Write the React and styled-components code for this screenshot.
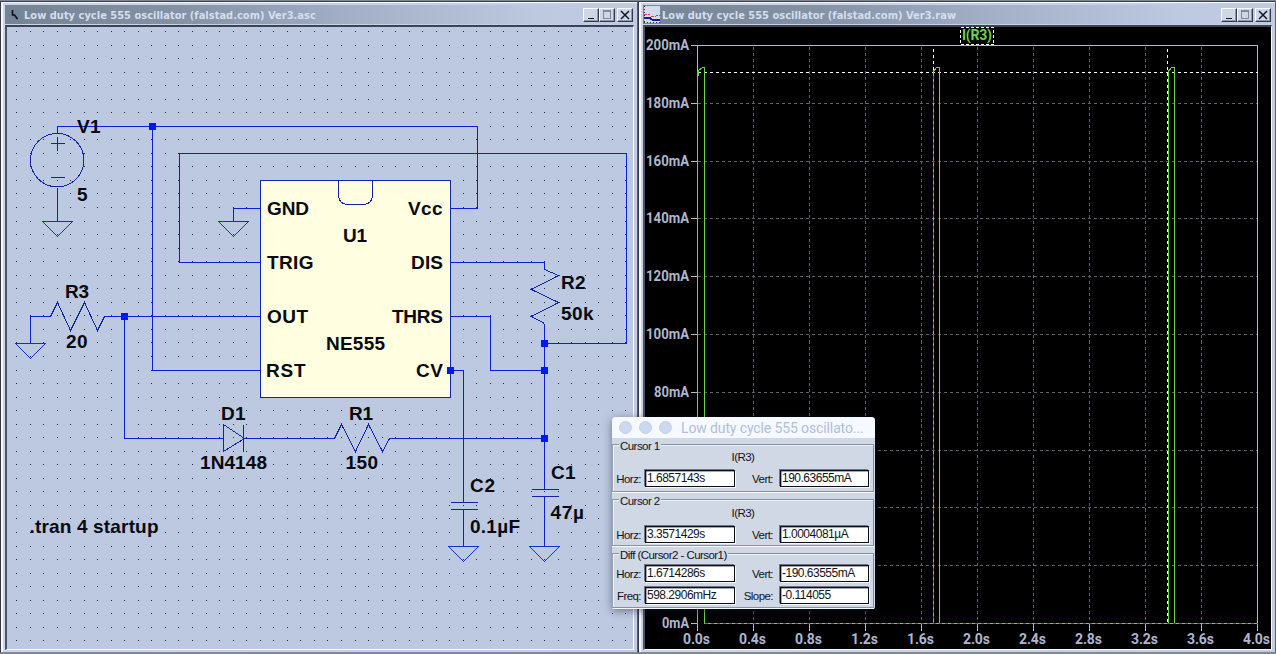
import React from "react";
import styled, { createGlobalStyle } from "styled-components";

const GlobalStyle = createGlobalStyle`
  html, body { margin: 0; padding: 0; overflow: hidden; background: #3c4252; }
  * { box-sizing: border-box; }
`;

const Desktop = styled.main`
  position: relative;
  display: flex;
  width: 1276px;
  height: 654px;
  padding-top: 1px;
  background: #7d8798;
`;

const Window = styled.section`
  width: ${(p) => p.$width}px;
  height: 652px;
  padding: 2px 1px 2px 2px;
  display: flex;
  flex-direction: column;
  background: linear-gradient(90deg, #cdd5e4, #c3cce3);
  border-top: 1px solid #3a3f50;
  border-left: 1px solid #353a4b;
  border-right: 1px solid #555e76;
  border-bottom: 1px solid #7c8aa9;
  box-shadow: inset 2px 1px 0 #f7f9fd;
`;

const TitleBar = styled.header`
  display: flex;
  align-items: center;
  height: 19px;
  margin: 1px 2px 1px 2px;
  padding: 0 1px 0 ${(p) => p.$inset}px;
  background: linear-gradient(90deg, #758494 0%, #8591a5 28%, #a3afc7 55%, #bdc8e1 85%, #c0cbe3 100%);
`;

const Title = styled.h1`
  flex: 1;
  margin: 2px 0 0 ${(p) => p.$gap || 0}px;
  font: bold 11px/18px "DejaVu Sans Condensed", "DejaVu Sans", sans-serif;
  letter-spacing: 0.01px;
  color: #d4deef;
  white-space: pre;
`;

const WindowButton = styled.button`
  width: 16px;
  height: 14px;
  padding: 0;
  margin-left: ${(p) => p.$gap || 0}px;
  display: grid;
  place-items: center;
  background: #cfd7e6;
  border: 1px solid;
  border-color: #fff #34394b #34394b #fff;
  box-shadow: inset -1px -1px #8e99ae;
`;

const Client = styled.div`
  flex: 1;
  min-height: 0;
  margin: 0 2px 0 2px;
  border-top: 2px solid #3b4356;
  border-left: 2px solid #4a5369;
  border-right: 1px solid #fafcff;
  border-bottom: 1px solid #fafcff;
  background: ${(p) => p.$bg};
  overflow: hidden;
`;

const Drawing = styled.svg`
  display: block;
`;

const Dialog = styled.section`
  position: absolute;
  left: 612px;
  top: 417px;
  width: 263px;
  height: 192px;
  display: flex;
  flex-direction: column;
  border-radius: 4px 4px 2px 2px;
  background: #d0d7e5;
  overflow: hidden;
  box-shadow: 0 2px 8px rgba(20, 28, 60, 0.5);
  font: 11.5px/14px "Liberation Sans", Arial, sans-serif;
  letter-spacing: -0.55px;
  color: #10131c;
`;

const DialogBar = styled.header`
  display: flex;
  align-items: center;
  height: 21px;
  padding-left: 7px;
  gap: 7px;
  background: #f6f9ff;
`;

const Light = styled.span`
  width: 13px;
  height: 13px;
  border-radius: 50%;
  background: #ccd8ed;
  border: 1px solid #c3d0e8;
`;

const DialogTitle = styled.h2`
  margin: 1px 0 0 2px;
  font: 400 14px/22px Roboto, sans-serif;
  letter-spacing: -0.12px;
  color: #aebfe0;
  white-space: nowrap;
`;

const Group = styled.section`
  position: relative;
  display: flex;
  flex-direction: column;
  height: ${(p) => p.$height}px;
  margin: ${(p) => p.$top}px 1px 0 0;
  border: 1px solid #8791a5;
  border-left-color: #9aa4b8;
  box-shadow: inset 1px 1px #eef2f9, 0 1px #f8faff;
  padding-top: ${(p) => p.$pad}px;
  gap: 3px;
`;

const Legend = styled.span`
  position: absolute;
  left: 6px;
  top: -6px;
  padding: 0 1px;
  line-height: 14px;
  background: #d0d7e5;
  white-space: nowrap;
`;

const TraceName = styled.div`
  text-align: center;
  line-height: 14px;
  margin-bottom: 2px;
`;

const Row = styled.div`
  display: grid;
  grid-template-columns: 32px 90px 45px 89px;
  align-items: center;
  height: 19px;
`;

const Label = styled.label`
  text-align: right;
  padding: 0 ${(p) => p.$gap}px 0 0;
`;

const Field = styled.output`
  height: 17px;
  padding-left: 1px;
  font-size: 12px;
  line-height: 15px;
  letter-spacing: -0.5px;
  background: #fff;
  border: 1px solid #0b0e16;
  box-shadow: -1px -1px #6d778a, 1px 1px #f8faff, inset 0.5px 0.5px #4b5160;
  white-space: nowrap;
`;

const WIRE = "#0a1fdc";
const PART = "#1024a8";
const TRACE = "#69d843";
const grid = (start, count) =>
  Array.from({ length: count }, (_, i) => start + Math.round(i * 13.54));
const dotPath = grid(31, 46)
  .map((y) => grid(16, 46).map((x) => `M${x} ${y}h1v1h-1z`).join(""))
  .join("");

const partLabels = [
  ["V1", 77, 133, 23.5], ["5", 77, 201, 10.5], ["R3", 65, 298, 24], ["20", 66, 348, 21.5],
  ["D1", 221, 420, 24.5], ["1N4148", 200, 469, 67], ["R1", 349, 420, 24], ["150", 345.5, 469, 32.5],
  ["R2", 561, 289, 24.5], ["50k", 561, 320, 32.5], ["C2", 470, 492, 25], ["0.1µF", 470, 532.5, 50],
  ["C1", 551, 479, 24.5], ["47µ", 550.5, 519, 33.5], [".tran 4 startup", 29.5, 532.5, 129],
  ["GND", 267, 215, 42], ["TRIG", 267, 269, 46.5], ["OUT", 267, 323, 41], ["RST", 266, 377, 39.5],
  ["Vcc", 408, 215, 34.5], ["DIS", 411, 269, 32], ["THRS", 392, 323, 51], ["CV", 416, 377, 27],
  ["U1", 343, 242, 24], ["NE555", 326, 350, 59],
];

const junctions = [[152, 126], [124, 316], [544, 343], [544, 370], [544, 438], [450, 370]];

function Ground({ x, y }) {
  return <path d={`M${x - 15} ${y}H${x + 15}L${x} ${y + 15}Z`} stroke="#1430cc" />;
}

function Schematic() {
  return (
    <Drawing width="627" height="623" viewBox="7 27 627 623">
      <path d={dotPath} fill="#20283c" shapeRendering="crispEdges" />
      <g transform="translate(.5 .5)" fill="none" stroke={WIRE} shapeRendering="crispEdges">
        <path d="M57 133V126H477V208H450M152 126V370H260M260 262H179V153H626V343H544M57 187V221M260 208H233V221M260 316H104M30 343V316H50M124 316V438H223M244 438H334M389 438H544M450 262H544V269M450 316H490V370H544M544 323V489M544 496V546M450 370H463V502M463 509V546" />
        <g stroke={PART}>
          <circle cx="56.7" cy="159.7" r="26.7" />
          <path d="M50 143H64M57 136V150M50 177H64" />
          <path d="M50 316L57 302L70 330L84 302L97 330L104 316" />
          <path d="M334 438L341 424L355 451L368 424L382 451L389 438" />
          <path d="M544 269L558 275L531 289L558 302L531 316L544 323" />
          <path d="M223 424V451L244 438ZM243 424V451" />
          <path d="M450 502H477M450 509H477M531 489H558M531 496H558" />
          <rect x="260" y="180" width="190" height="217" fill="#fffee0" />
          <path d="M338 180V194Q338 204 348 204H362Q372 204 372 194V180" />
        </g>
        <Ground x={57} y={221} />
        <Ground x={233} y={221} />
        <Ground x={30} y={343} />
        <Ground x={463} y={546} />
        <Ground x={544} y={546} />
      </g>
      {junctions.map(([x, y]) => (
        <rect key={`${x}-${y}`} x={x - 3} y={y - 3} width="7" height="7" fill="#0018f5" />
      ))}
      <g fontFamily="'Liberation Sans', Arial, sans-serif" fontSize="19" fontWeight="700" fill="#080a12">
        {partLabels.map(([text, x, y, w]) => (
          <text key={text} x={x} y={y} textLength={w}>{text}</text>
        ))}
      </g>
    </Drawing>
  );
}

const xs = Array.from({ length: 11 }, (_, i) => 697 + 56 * i);
const ys = Array.from({ length: 11 }, (_, i) => Math.round(45 + 57.8 * i));
const currentLabels = [200, 180, 160, 140, 120, 100, 80, 0];

function Plot() {
  return (
    <Drawing width="626" height="623" viewBox="645 27 626 623">
      <g transform="translate(.5 .5)" fill="none" shapeRendering="crispEdges">
        <path
          stroke="#5f626f"
          strokeDasharray="3 3"
          d={xs.slice(1, 10).map((x) => `M${x} 46V623`).join("") + ys.slice(1, 10).map((y) => `M697 ${y}H1257`).join("")}
        />
        <path
          stroke="#b3bace"
          d={"M697 623V45H1257V623" + ys.map((y) => `M690 ${y}H697`).join("") + xs.map((x) => `M${x} 623V630`).join("")}
        />
        <path stroke="#fff" strokeDasharray="3 3" d="M697 72H1257M933 48V72" />
        <path stroke={TRACE} d="M698 75V70L702 67H704M933 71L936 67H939M1168 71L1171 67H1174M704 623H1257" />
      </g>
      <g fill={TRACE} shapeRendering="crispEdges">
        {[[697, 70], [704, 67], [933, 70], [939, 67], [1168, 70], [1174, 67]].map(([x, y]) => (
          <rect key={x} x={x} y={y} width="1" height={624 - y} />
        ))}
      </g>
      <g transform="translate(.5 .5)" fill="none" shapeRendering="crispEdges">
        <path stroke="#fff" strokeDasharray="3 3" d="M1167 48V623" />
        <path stroke="#9b369a" strokeDasharray="3 3" d="M704 623H1257M933 75V623" />
        <rect x="960" y="27" width="33" height="17" stroke="#fff" strokeDasharray="3 2" />
      </g>
      <g fontFamily="Roboto, sans-serif" fontSize="14" fontWeight="700" fill="#aeb7ce">
        {currentLabels.map((value) => {
          const w = value >= 100 ? 43 : value > 0 ? 35 : 27;
          return (
            <text key={value} x={689 - w} y={ys[(200 - value) / 20] + 5} textLength={w} lengthAdjust="spacingAndGlyphs">
              {`${value}mA`}
            </text>
          );
        })}
        {xs.map((x, i) => (
          <text key={x} x={x - 14} y="644" textLength="27">{`${(0.4 * i).toFixed(1)}s`}</text>
        ))}
        <text x="962" y="40" textLength="30" fill={TRACE}>I(R3)</text>
      </g>
    </Drawing>
  );
}

function WindowControls() {
  const ink = { fill: "none", shapeRendering: "crispEdges" };
  return (
    <>
      <WindowButton aria-label="Minimize">
        <svg width="12" height="10" {...ink}><path d="M3 8.5H9" stroke="#111624" /></svg>
      </WindowButton>
      <WindowButton aria-label="Maximize">
        <svg width="12" height="10" {...ink}><path d="M2 1H10" stroke="#7e899f" strokeWidth="2" /><path d="M2.5 1V9M9.5 1V9M2 8.5H10" stroke="#7e899f" /></svg>
      </WindowButton>
      <WindowButton aria-label="Close" $gap={2}>
        <svg width="12" height="10" fill="none"><path d="M2 1L10 9M10 1L2 9" stroke="#111624" strokeWidth="1.5" /></svg>
      </WindowButton>
    </>
  );
}

function Reading({ labels, values }) {
  return (
    <Row>
      <Label $gap={4}>{labels[0]}</Label>
      <Field>{values[0]}</Field>
      <Label $gap={7}>{labels[1]}</Label>
      <Field>{values[1]}</Field>
    </Row>
  );
}

export default function App() {
  return (
    <Desktop>
      <GlobalStyle />
      <Window $width={638}>
        <TitleBar $inset={6}>
          <svg width="13" height="18" viewBox="0 0 13 18" fill="none">
            <path d="M1.5 4V9H3.5L6.5 13" stroke="#0b0e18" strokeWidth="1.6" />
          </svg>
          <Title>Low duty cycle 555 oscillator (falstad.com) Ver3.asc</Title>
          <WindowControls />
        </TitleBar>
        <Client $bg="#bdc9e0"><Schematic /></Client>
      </Window>
      <Window $width={638}>
        <TitleBar $inset={1}>
          <svg width="17" height="17" viewBox="0 0 17 17" shapeRendering="crispEdges">
            <path d="M0 0H16V17H0Z" fill="#d3dced" />
            <path d="M0 8H5L7 10H12L16 9" stroke="#d43b46" fill="none" strokeDasharray="3 1" />
            <path d="M0 12H6L8 13.5H16" stroke="#1420a0" strokeWidth="2" fill="none" />
            <path d="M.5 0V17M0 16.5H16" stroke="#242a3a" strokeDasharray="1 2" />
          </svg>
          <Title $gap={1}>Low duty cycle 555 oscillator (falstad.com) Ver3.raw</Title>
          <WindowControls />
        </TitleBar>
        <Client $bg="#000"><Plot /></Client>
      </Window>
      <Dialog>
        <DialogBar>
          <Light /><Light /><Light />
          <DialogTitle>Low duty cycle 555 oscillato...</DialogTitle>
        </DialogBar>
        <Group $top={6} $height={48} $pad={5}>
          <Legend>Cursor 1</Legend>
          <TraceName>I(R3)</TraceName>
          <Reading labels={["Horz:", "Vert:"]} values={["1.6857143s", "190.63655mA"]} />
        </Group>
        <Group $top={7} $height={47} $pad={6}>
          <Legend>Cursor 2</Legend>
          <TraceName>I(R3)</TraceName>
          <Reading labels={["Horz:", "Vert:"]} values={["3.3571429s", "1.0004081µA"]} />
        </Group>
        <Group $top={7} $height={55} $pad={10}>
          <Legend>Diff (Cursor2 - Cursor1)</Legend>
          <Reading labels={["Horz:", "Vert:"]} values={["1.6714286s", "-190.63555mA"]} />
          <Reading labels={["Freq:", "Slope:"]} values={["598.2906mHz", "-0.114055"]} />
        </Group>
      </Dialog>
    </Desktop>
  );
}
